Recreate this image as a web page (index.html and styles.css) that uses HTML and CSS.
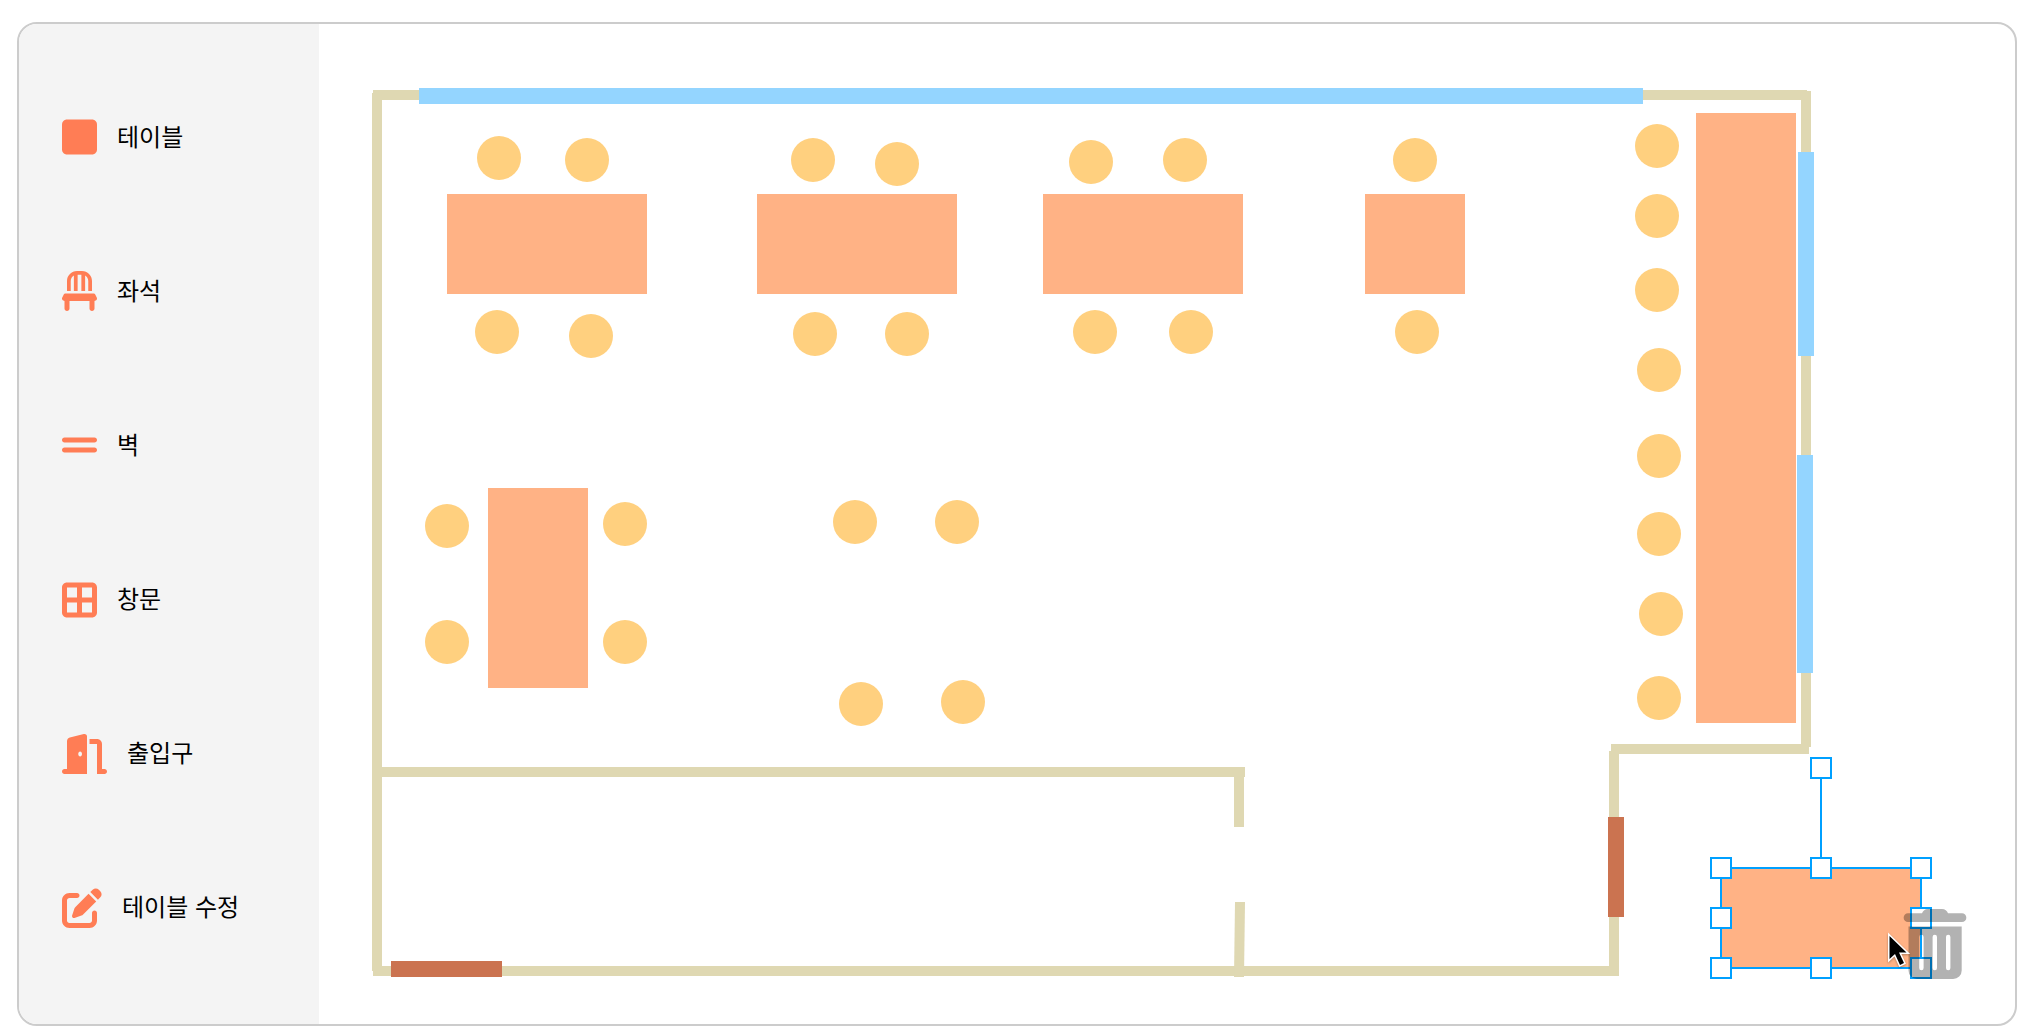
FILE: index.html
```html
<!DOCTYPE html>
<html lang="ko">
<head>
<meta charset="utf-8">
<meta name="viewport" content="width=device-width, initial-scale=1">
<title>테이블 수정</title>
<link rel="stylesheet" href="styles.css">
</head>
<body>
<main class="editor">
  <nav class="palette" aria-label="도구">
    <button class="tool" type="button">
      <svg class="tool-icon" viewBox="0 0 448 512" aria-hidden="true"><path d="M64 32H384c35.300 0 64 28.700 64 64V416c0 35.300-28.700 64-64 64H64c-35.300 0-64-28.700-64-64V96C0 60.700 28.700 32 64 32z"/></svg>
      <span class="tool-label">테이블</span>
    </button>
    <button class="tool" type="button">
      <svg class="tool-icon" viewBox="0 0 448 512" aria-hidden="true"><path d="M248 48V256h48V58.700c23.900 13.800 40 39.700 40 69.300V256h48V128C384 57.300 326.700 0 256 0H192C121.300 0 64 57.300 64 128V256h48V128c0-29.600 16.100-55.500 40-69.300V256h48V48h48zM48 288c-12.100 0-23.200 6.800-28.600 17.700l-16 32c-5 9.900-4.400 21.700 1.400 31.100S20.900 384 32 384v96c0 17.700 14.300 32 32 32s32-14.300 32-32V384H352v96c0 17.700 14.300 32 32 32s32-14.300 32-32V384c11.100 0 21.400-5.700 27.200-15.200s6.400-21.200 1.400-31.100l-16-32C423.200 294.800 412.100 288 400 288H48z"/></svg>
      <span class="tool-label">좌석</span>
    </button>
    <button class="tool" type="button">
      <svg class="tool-icon" viewBox="0 0 448 512" aria-hidden="true"><path d="M32 288c-17.700 0-32 14.300-32 32s14.300 32 32 32H416c17.700 0 32-14.300 32-32s-14.300-32-32-32H32zM32 160c-17.700 0-32 14.300-32 32s14.300 32 32 32H416c17.700 0 32-14.300 32-32s-14.300-32-32-32H32z"/></svg>
      <span class="tool-label">벽</span>
    </button>
    <button class="tool" type="button">
      <svg class="tool-icon" viewBox="0 0 448 512" aria-hidden="true"><path d="M384 96V224H256V96H384zm0 192V416H256V288H384zM192 224H64V96H192V224zM64 288H192V416H64V288zM64 32C28.700 32 0 60.700 0 96V416c0 35.300 28.700 64 64 64H384c35.300 0 64-28.700 64-64V96c0-35.300-28.700-64-64-64H64z"/></svg>
      <span class="tool-label">창문</span>
    </button>
    <button class="tool" type="button">
      <svg class="tool-icon" viewBox="0 0 576 512" aria-hidden="true"><path d="M320 32c0-9.900-4.500-19.200-12.300-25.200S289.800-1.400 280.200 1l-179.900 45C79 51.300 64 70.500 64 92.500V448H32c-17.700 0-32 14.300-32 32s14.300 32 32 32H96 288h32V480 32zM256 256c0 17.700-10.700 32-24 32s-24-14.300-24-32s10.700-32 24-32s24 14.300 24 32zm96-128h96V480c0 17.700 0 32 0 32h96c17.700 0 32-14.300 32-32s-14.300-32-32-32H512V128c0-35.300-28.700-64-64-64H352v64z"/></svg>
      <span class="tool-label">출입구</span>
    </button>
    <button class="tool" type="button">
      <svg class="tool-icon" viewBox="0 0 512 512" aria-hidden="true"><path d="M471.600 21.700c-21.900-21.900-57.300-21.900-79.200 0L362.300 51.700l97.900 97.900 30.100-30.100c21.900-21.900 21.900-57.300 0-79.200L471.600 21.700zm-299.200 220c-6.100 6.100-10.800 13.600-13.500 21.900l-29.600 88.800c-2.900 8.600-.600 18.100 5.800 24.600s15.900 8.700 24.600 5.800l88.800-29.600c8.200-2.700 15.700-7.400 21.900-13.500L437.700 172.300 339.700 74.300 172.400 241.700zM96 64C43 64 0 107 0 160V416c0 53 43 96 96 96H352c53 0 96-43 96-96V320c0-17.700-14.300-32-32-32s-32 14.300-32 32v96c0 17.700-14.300 32-32 32H96c-17.700 0-32-14.300-32-32V160c0-17.700 14.300-32 32-32h96c17.700 0 32-14.300 32-32s-14.300-32-32-32H96z"/></svg>
      <span class="tool-label">테이블 수정</span>
    </button>
  </nav>

  <svg class="plan" viewBox="319 24 1696 1000" role="img" aria-label="매장 배치도">
    <g class="wall">
      <rect x="372" y="93" width="10" height="878"/>
      <rect x="373" y="90" width="1434" height="10"/>
      <rect x="1801" y="91" width="10" height="656"/>
      <rect x="1611" y="744" width="198" height="10"/>
      <rect x="1609" y="751" width="10" height="216"/>
      <rect x="373" y="966" width="1246" height="10"/>
      <rect x="382" y="767" width="863" height="10"/>
      <rect x="1234" y="777" width="10" height="50"/>
      <path d="M1235 902h10l-1 75h-10z"/>
    </g>
    <g class="window">
      <rect x="419" y="88" width="1224" height="16"/>
      <rect x="1798" y="152" width="16" height="204"/>
      <rect x="1797" y="455" width="16" height="218"/>
    </g>
    <g class="door">
      <rect x="391" y="961" width="111" height="16"/>
      <rect x="1608" y="817" width="16" height="100"/>
    </g>
    <g class="table">
      <rect x="447" y="194" width="200" height="100"/>
      <rect x="757" y="194" width="200" height="100"/>
      <rect x="1043" y="194" width="200" height="100"/>
      <rect x="1365" y="194" width="100" height="100"/>
      <rect x="1696" y="113" width="100" height="610"/>
      <rect x="488" y="488" width="100" height="200"/>
      <rect x="1721" y="868" width="200" height="100"/>
    </g>
    <g class="seat">
      <circle cx="499" cy="158" r="22"/><circle cx="587" cy="160" r="22"/>
      <circle cx="497" cy="332" r="22"/><circle cx="591" cy="336" r="22"/>
      <circle cx="813" cy="160" r="22"/><circle cx="897" cy="164" r="22"/>
      <circle cx="815" cy="334" r="22"/><circle cx="907" cy="334" r="22"/>
      <circle cx="1091" cy="162" r="22"/><circle cx="1185" cy="160" r="22"/>
      <circle cx="1095" cy="332" r="22"/><circle cx="1191" cy="332" r="22"/>
      <circle cx="1415" cy="160" r="22"/><circle cx="1417" cy="332" r="22"/>
      <circle cx="447" cy="526" r="22"/><circle cx="625" cy="524" r="22"/>
      <circle cx="447" cy="642" r="22"/><circle cx="625" cy="642" r="22"/>
      <circle cx="855" cy="522" r="22"/><circle cx="957" cy="522" r="22"/>
      <circle cx="861" cy="704" r="22"/><circle cx="963" cy="702" r="22"/>
      <circle cx="1657" cy="146" r="22"/><circle cx="1657" cy="216" r="22"/>
      <circle cx="1657" cy="290" r="22"/><circle cx="1659" cy="370" r="22"/>
      <circle cx="1659" cy="456" r="22"/><circle cx="1659" cy="534" r="22"/>
      <circle cx="1661" cy="614" r="22"/><circle cx="1659" cy="698" r="22"/>
    </g>
    <g class="selection">
      <path class="selection-line" d="M1821 768V868M1721 868h200v100h-200z"/>
      <rect x="1811" y="758" width="20" height="20"/>
      <rect x="1711" y="858" width="20" height="20"/>
      <rect x="1811" y="858" width="20" height="20"/>
      <rect x="1911" y="858" width="20" height="20"/>
      <rect x="1711" y="908" width="20" height="20"/>
      <rect x="1911" y="908" width="20" height="20"/>
      <rect x="1711" y="958" width="20" height="20"/>
      <rect x="1811" y="958" width="20" height="20"/>
      <rect x="1911" y="958" width="20" height="20"/>
    </g>
    <path class="trash" d="M1908 913.300h14c1-2.600 3-4.300 6-4.300h14c3 0 5 1.700 6 4.300h14a4.300 4.300 0 0 1 0 8.700h-54a4.300 4.300 0 0 1 0-8.700zM1908.500 926.500h53.200v44a8.500 8.500 0 0 1-8.500 8.500h-36.200a8.500 8.500 0 0 1-8.500-8.500zM1919.200 937v31a2.200 2.200 0 0 0 4.400 0v-31a2.200 2.200 0 0 0-4.400 0zM1932.600 937v31a2.200 2.200 0 0 0 4.400 0v-31a2.200 2.200 0 0 0-4.400 0zM1946 937v31a2.200 2.200 0 0 0 4.400 0v-31a2.200 2.200 0 0 0-4.400 0z"/>
    <path class="pointer" d="M1889.500 936v23l5.500-5 5 11 4-2-5-10.500h7.500z"/>
  </svg>
</main>
</body>
</html>
```
FILE: styles.css
```css
* {
  box-sizing: border-box;
}

body {
  margin: 0;
  padding: 22px 15px 9px 17px;
  background: #fff;
  font-family: "Noto Sans CJK KR", sans-serif;
}

.editor {
  display: grid;
  grid-template-columns: 300px 1fr;
  border: 2px solid #ccc;
  border-radius: 20px;
  overflow: hidden;
}

.palette {
  display: grid;
  grid-auto-rows: 1fr;
  padding: 36px 0 39px;
  background: #f4f4f4;
}

.tool {
  display: flex;
  align-items: center;
  gap: 20px;
  padding: 0 43px;
  border: 0;
  background: none;
  color: #000;
  font: inherit;
  font-size: 24px;
  line-height: 36px;
  cursor: pointer;
}

.tool-label {
  padding-bottom: 3px;
}

.tool-icon {
  height: 40px;
  fill: #ff7d55;
}

.plan {
  display: block;
  width: 100%;
}

.wall { fill: #dfd8b2; }
.window { fill: #94d5ff; }
.door { fill: #cb7350; }
.table { fill: #ffb285; }
.seat { fill: #ffd07f; }

.selection {
  fill: #fff;
  stroke: #00a0ff;
  stroke-width: 2px;
}

.selection-line {
  fill: none;
}

.trash {
  fill: #000;
  fill-rule: evenodd;
  opacity: 0.3;
}

.pointer {
  fill: #000;
  stroke: #fff;
  stroke-width: 3px;
  paint-order: stroke;
  filter: drop-shadow(0 1px 1px rgba(0, 0, 0, 0.3));
}
```
